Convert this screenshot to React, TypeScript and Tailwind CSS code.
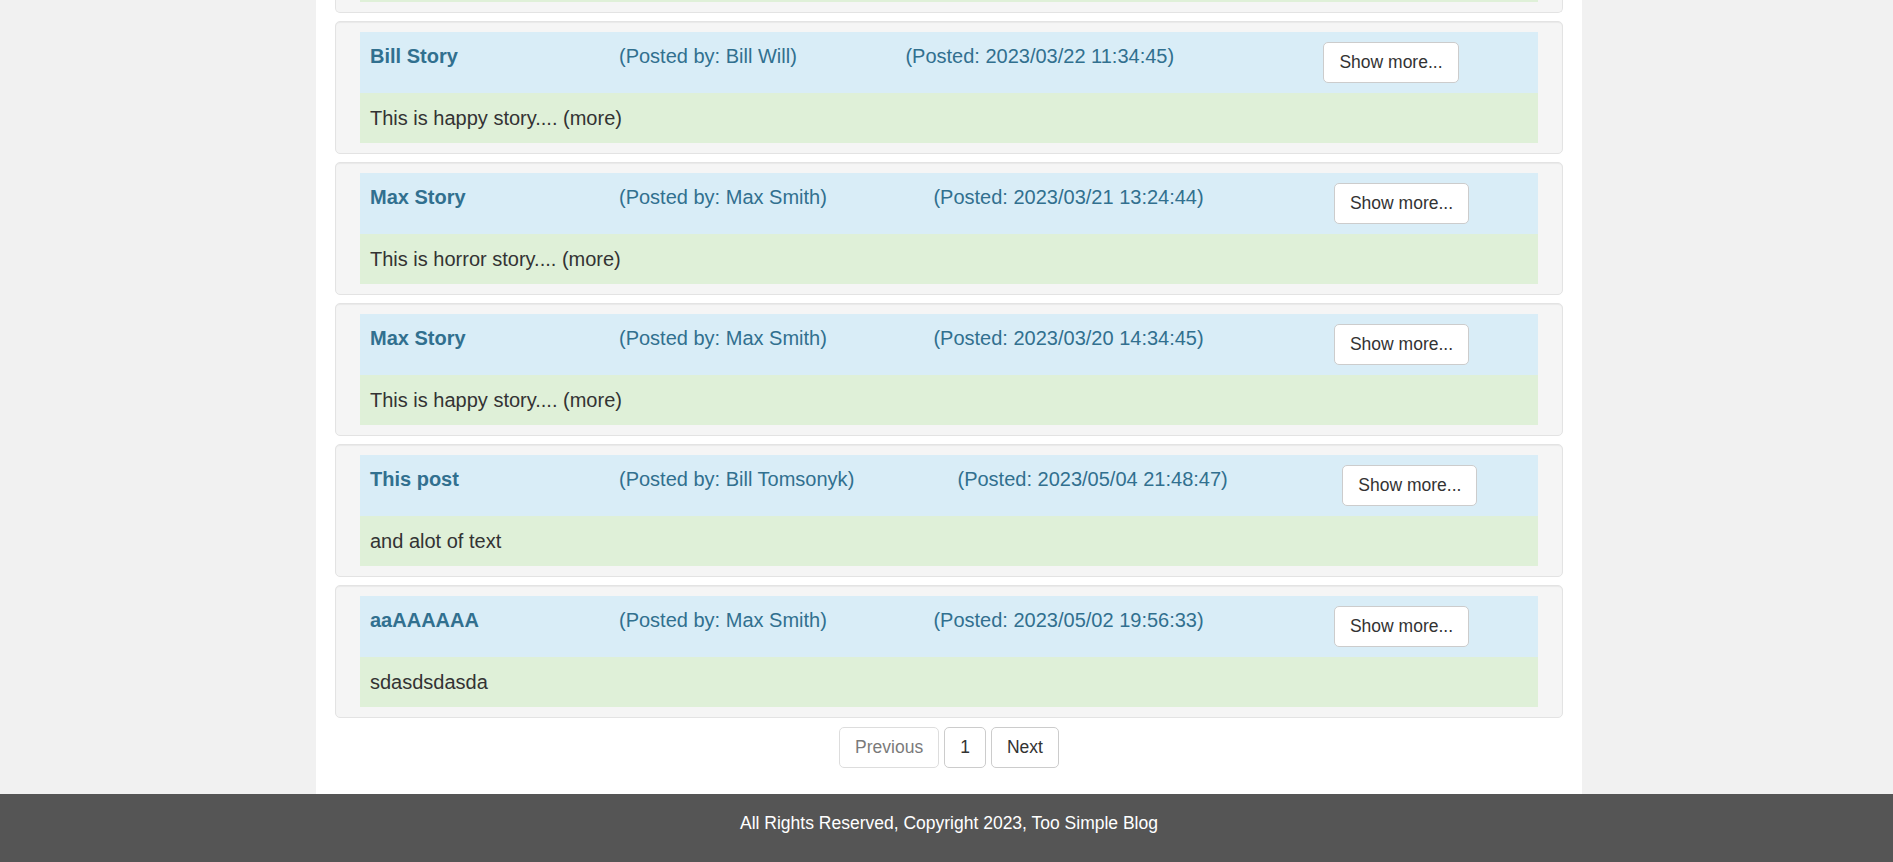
type Post = {
  title: string;
  author: string;
  posted: string;
  body: string;
};

const posts: Post[] = [
  { title: "Bill Story", author: "Bill Will", posted: "2023/03/22 11:34:45", body: "This is happy story.... (more)" },
  { title: "Max Story", author: "Max Smith", posted: "2023/03/21 13:24:44", body: "This is horror story.... (more)" },
  { title: "Max Story", author: "Max Smith", posted: "2023/03/20 14:34:45", body: "This is happy story.... (more)" },
  { title: "This post", author: "Bill Tomsonyk", posted: "2023/05/04 21:48:47", body: "and alot of text" },
  { title: "aaAAAAAA", author: "Max Smith", posted: "2023/05/02 19:56:33", body: "sdasdsdasda" },
];

function PostCard({ post }: { post: Post }) {
  return (
    <div className="rounded-[5px] border border-[#e3e3e3] bg-[#f5f5f5] px-[24px] py-[10px] shadow-[inset_0_1px_1px_rgba(0,0,0,0.05)]">
      <table className="w-full table-auto border-collapse bg-[#d9edf7] text-[20px] leading-[28.57px] text-[#31708f]">
        <tbody>
          <tr>
            <td className="w-[249px] p-[10px] align-top font-bold">{post.title}</td>
            <td className="p-[10px] align-top whitespace-nowrap">(Posted by: {post.author})</td>
            <td className="p-[10px] align-top whitespace-nowrap">(Posted: {post.posted})</td>
            <td className="p-[10px] align-top">
              <button className="block whitespace-nowrap rounded-[5px] border border-[#ccc] bg-white px-[15px] py-[7px] text-[17.5px] leading-[25px] text-[#333]">
                Show more...
              </button>
            </td>
          </tr>
        </tbody>
      </table>
      <div className="bg-[#dff0d8] px-[10px] py-[10px] text-[20px] leading-[30px] text-[#333]">
        {post.body}
      </div>
    </div>
  );
}

export default function App() {
  return (
    <div className="min-h-screen bg-[#f1f1f1] font-['Liberation_Sans',Arial,sans-serif]">
      <div className="ml-[316px] w-[1266px] bg-white px-[19px] pb-[26px]">
        <div className="flex flex-col gap-[8px]">
          {/* bottom of the story above, scrolled out of view */}
          <div className="rounded-b-[5px] border border-t-0 border-[#e3e3e3] bg-[#f5f5f5] px-[24px] pb-[10px]">
            <div className="h-[2px] bg-[#dff0d8]" />
          </div>
          {posts.map((p, i) => (
            <PostCard key={i} post={p} />
          ))}
        </div>

        <div className="mt-[9px] flex justify-center gap-[5px] text-[17.5px] leading-[25px] text-[#333]">
          <button disabled className="rounded-[5px] border border-[#ccc] bg-white px-[15px] py-[7px] opacity-65">
            Previous
          </button>
          <button className="rounded-[5px] border border-[#ccc] bg-white px-[15px] py-[7px]">1</button>
          <button className="rounded-[5px] border border-[#ccc] bg-white px-[15px] py-[7px]">Next</button>
        </div>
      </div>

      <footer className="h-[68px] bg-[#555] pt-[17px]">
        <div className="ml-[316px] w-[1266px] text-center text-[17.5px] leading-[25px] text-white">
          All Rights Reserved, Copyright 2023, Too Simple Blog
        </div>
      </footer>
    </div>
  );
}
